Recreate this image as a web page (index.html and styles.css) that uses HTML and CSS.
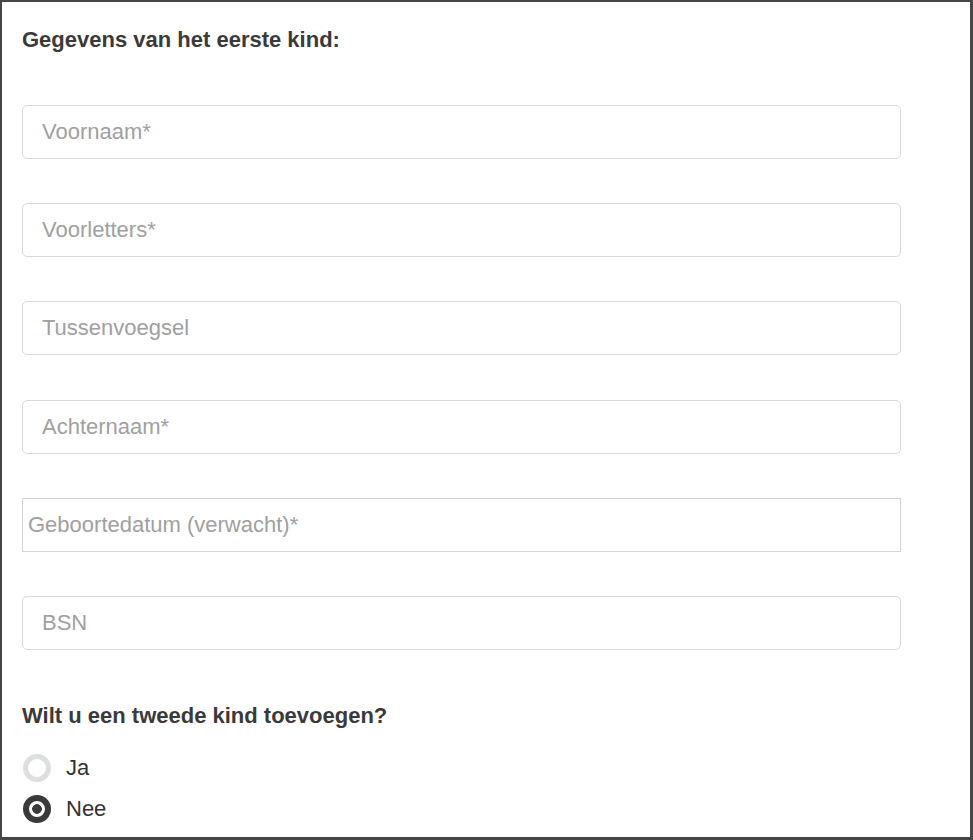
FILE: index.html
```html
<!DOCTYPE html>
<html lang="nl">
<head>
<meta charset="utf-8">
<title>Gegevens kind</title>
<link rel="stylesheet" href="styles.css">
</head>
<body>
<div class="frame">
  <form class="form">
    <h2 class="title">Gegevens van het eerste kind:</h2>
    <div class="fields">
      <input class="field" type="text" placeholder="Voornaam*">
      <input class="field" type="text" placeholder="Voorletters*">
      <input class="field" type="text" placeholder="Tussenvoegsel">
      <input class="field" type="text" placeholder="Achternaam*">
      <input class="field field-date" type="text" placeholder="Geboortedatum (verwacht)*">
      <input class="field" type="text" placeholder="BSN">
    </div>
    <h2 class="title question">Wilt u een tweede kind toevoegen?</h2>
    <div class="radios">
      <label class="radio"><span class="dot"></span><span class="radio-label">Ja</span></label>
      <label class="radio checked"><span class="dot"></span><span class="radio-label">Nee</span></label>
    </div>
  </form>
</div>
</body>
</html>
```

FILE: styles.css
```css
html, body {
  margin: 0;
  padding: 0;
  background: #fff;
}
body {
  font-family: "Liberation Sans", Arial, sans-serif;
  color: #333;
}
.frame {
  box-sizing: border-box;
  width: 973px;
  height: 840px;
  border-style: solid;
  border-color: #464646;
  border-width: 2px 3px 3px 2px;
  padding: 0 0 0 20px;
  overflow: hidden;
}
.form {
  width: 879px;
}
.title {
  margin: 0;
  font-size: 22px;
  font-weight: bold;
  color: #3a3a3a;
  line-height: 24px;
}
.form > .title:first-child {
  padding-top: 26px;
}
.fields {
  display: flex;
  flex-direction: column;
  gap: 44.2px;
  margin-top: 53px;
}
.field {
  box-sizing: border-box;
  display: block;
  width: 879px;
  height: 54px;
  margin: 0;
  padding: 0 19px;
  border: 1px solid #d9d9d9;
  border-radius: 5px;
  font-family: "Liberation Sans", Arial, sans-serif;
  font-size: 22px;
  color: #333;
  background: #fff;
  outline: none;
}
.field::placeholder {
  color: #a0a0a0;
}
.field-date {
  border-radius: 0;
  padding: 0 5px;
  border-color: #d4d4d4;
}
.question {
  margin-top: 54px;
}
.radios {
  display: flex;
  flex-direction: column;
  gap: 13px;
  margin-top: 26px;
  padding-left: 1px;
}
.radio {
  display: flex;
  align-items: center;
  gap: 15px;
  font-size: 22px;
  color: #333;
  height: 28px;
}
.dot {
  box-sizing: border-box;
  width: 28px;
  height: 28px;
  border-radius: 50%;
  border: 5px solid #dcdfe0;
  background: #fff;
  flex: none;
}
.checked .dot {
  border: 6px solid #3a3a3a;
  background: radial-gradient(circle, #3a3a3a 0 4.5px, #fff 5.1px);
}
```
